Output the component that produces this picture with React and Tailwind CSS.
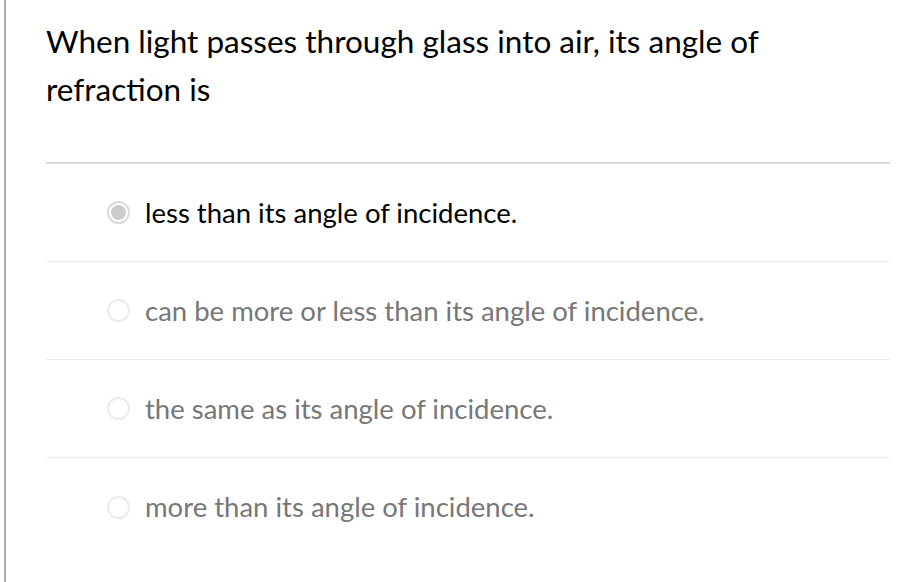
import React from "react";

const options = [
  { text: "less than its angle of incidence.", selected: true },
  { text: "can be more or less than its angle of incidence.", selected: false },
  { text: "the same as its angle of incidence.", selected: false },
  { text: "more than its angle of incidence.", selected: false },
];

function Radio({ selected }) {
  if (selected) {
    return (
      <div className="w-[23px] h-[23px] rounded-full border-2 border-[#d9d9d9] bg-white flex items-center justify-center shrink-0">
        <div className="w-[15px] h-[15px] rounded-full bg-[#cccccc]" />
      </div>
    );
  }
  return <div className="w-[23px] h-[23px] rounded-full border-2 border-[#ebebeb] bg-white shrink-0" />;
}

export default function App() {
  return (
    <div className="w-[908px] h-[582px] bg-white overflow-hidden pl-1" style={{ fontFamily: "Lato, 'Open Sans', sans-serif" }}>
      <div className="h-full border-l-2 border-[#ababab] pl-10 pr-[18px]">
        <div className="pt-[17px] pb-[49px] text-[31.5px] leading-[48px] text-black">
          When light passes through glass into air, its angle of
          <br />
          refraction is
        </div>
        <div className="border-t-2 border-[#dcdcdc]">
          {options.map((o, i) => (
            <div
              key={i}
              className={
                "h-[98px] flex items-center pl-[61px] gap-[15px] " +
                (i < options.length - 1 ? "border-b border-[#ececec]" : "")
              }
            >
              <Radio selected={o.selected} />
              <span className={"text-[27.5px] " + (o.selected ? "text-black" : "text-[#777777]")}>{o.text}</span>
            </div>
          ))}
        </div>
      </div>
    </div>
  );
}
